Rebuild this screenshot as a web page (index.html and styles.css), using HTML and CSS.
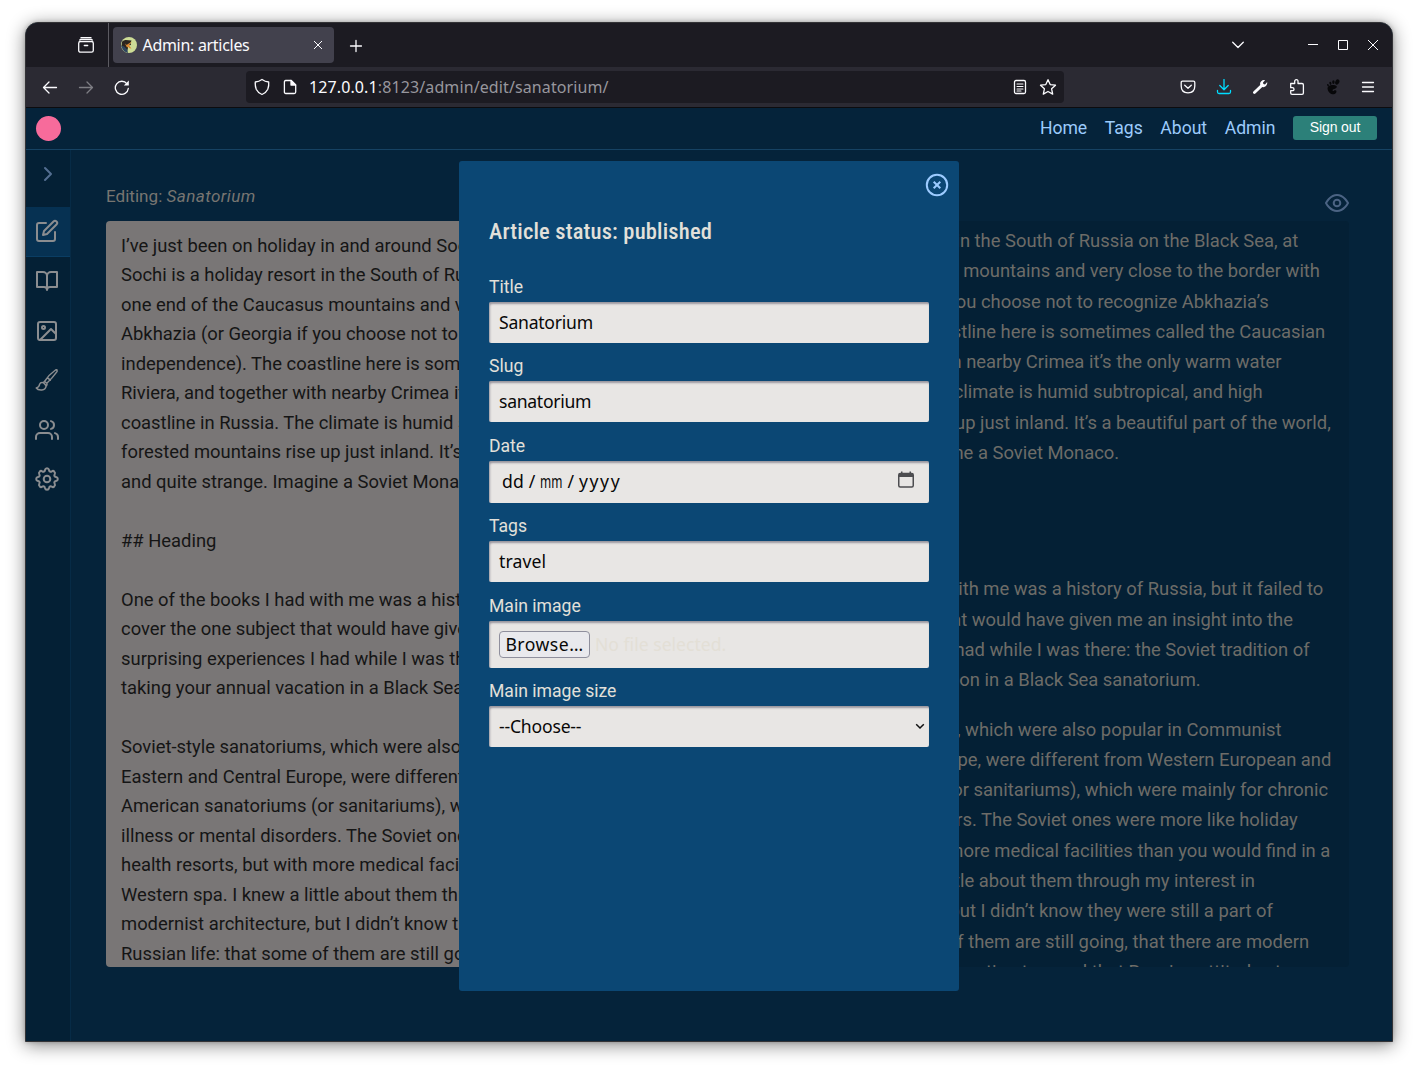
FILE: index.html
```html
<!DOCTYPE html>
<html lang="en">
<head>
<meta charset="utf-8">
<title>Admin: articles</title>
<link rel="stylesheet" href="styles.css">
</head>
<body>
<div class="window">
  <div class="tabbar">
    <svg class="icon history" width="18" height="18" viewBox="0 0 18 18"><path d="M4 1.700h10M2.800 4.200q0-.8 1-.8h10.400q1 0 1 .8"/><rect x="1.700" y="5.500" width="14.600" height="10.700" rx="1.800"/><path d="M7.300 9.500h3.400"/></svg>
    <div class="tab">
      <svg class="favicon" width="16" height="16" viewBox="0 0 16 16"><circle cx="8" cy="8" r="8" fill="#cddc96"/><path d="M1.200 4.500Q3 2.600 5 3l5.500.6-1 2.400.5 2-3.500.5.500 2.500-1 3.500Q2 13 .5 9z" fill="#2b2620"/><path d="M11 4.500L8 8.200l2.500 3.300-2-.3L5.500 8zM4 6.500l3.500 3-1.500 1z" fill="#dc8b32"/><path d="M.2 8.500l3 1 3 3 .8 3.400Q1.600 15 .2 8.500z" fill="#2d4660"/></svg>
      <span class="tab-title">Admin: articles</span>
      <svg class="icon thin" width="10" height="10" viewBox="0 0 10 10"><path d="M1 1l8 8M9 1l-8 8"/></svg>
    </div>
    <svg class="icon newtab" width="14" height="14" viewBox="0 0 14 14"><path d="M7 1.500v11M1.500 7h11"/></svg>
    <div class="controls">
      <svg class="icon alltabs" width="14" height="8" viewBox="0 0 14 8"><path d="M1.700 1.200L7 6.500l5.300-5.300"/></svg>
      <svg class="icon thin" width="12" height="12" viewBox="0 0 12 12"><path d="M1 5.500h10"/></svg>
      <svg class="icon thin" width="12" height="12" viewBox="0 0 12 12"><rect x="1.500" y="1.500" width="9" height="9"/></svg>
      <svg class="icon thin" width="12" height="12" viewBox="0 0 12 12"><path d="M1 1l10 10M11 1L1 11"/></svg>
    </div>
  </div>
  <div class="toolbar">
    <svg class="icon" width="16" height="16" viewBox="0 0 16 16"><path d="M14.500 8.500H1.500M7 3L1.500 8.500 7 14"/></svg>
    <svg class="icon faded" width="16" height="16" viewBox="0 0 16 16"><path d="M1.500 8.500h13M9 3l5.500 5.500L9 14"/></svg>
    <svg class="icon" width="16" height="16" viewBox="0 0 16 16"><path d="M14.300 9.500A6.500 6.500 0 1 1 13 4.800"/><path d="M14.800 1.500v5H9.800z" fill="#fbfbfe" stroke="none"/></svg>
    <div class="urlbar">
      <svg class="icon" width="16" height="18" viewBox="0 0 16 18"><path d="M8 1.500q3 2.300 6.700 2.500.4 3.500-.9 7.300Q12 15 8 16.500 4 15 2.200 11.300.9 7.500 1.300 4 5 3.800 8 1.500z"/></svg>
      <svg class="icon page" width="14" height="16" viewBox="0 0 14 16"><path d="M2.700 1.500h5.500L12.700 6v7q0 1.500-1.500 1.500H2.900q-1.500 0-1.500-1.500V3q0-1.500 1.300-1.500z"/><path d="M8 1.500V6h4.600z" fill="#fbfbfe"/></svg>
      <span class="url"><b>127.0.0.1</b>:8123/admin/edit/sanatorium/</span>
      <svg class="icon reader" width="14" height="16" viewBox="0 0 14 16"><rect x="1.500" y="1.500" width="11" height="13" rx="1.500"/><path d="M4 5h6M4 7.500h6M4 10h6M4 12h4" stroke-width="1.100"/></svg>
      <svg class="icon" width="18" height="18" viewBox="0 0 18 18"><path d="M9 1.700l2.200 4.900 5.300.6-3.900 3.600 1.100 5.300L9 13.500l-4.700 2.600 1.100-5.300-3.900-3.600 5.300-.6z"/></svg>
    </div>
    <div class="extensions">
      <svg class="icon" width="16" height="16" viewBox="0 0 16 16"><path d="M2.500 2.200h11q1.300 0 1.300 1.300V7q0 6.700-6.800 6.900Q1.200 13.700 1.200 7V3.500q0-1.300 1.300-1.300zM4.700 6.200L8 9.300l3.300-3.100"/></svg>
      <svg class="icon download" width="16" height="16" viewBox="0 0 16 16"><path d="M8 .5v10M3.800 6.500L8 10.700l4.200-4.200M1.500 11.500v1.500q0 1.500 1.500 1.500h10q1.500 0 1.500-1.500v-1.500"/></svg>
      <svg width="16" height="16" viewBox="0 0 16 16" fill="#fbfbfe"><path d="M10.500 1.200q1.500-.6 2.600 0L11 3.500l.4 1.500 1.600.4L15.200 3q.5 2.300-1.200 4-1.500 1.500-3.700 1L3.400 14.600q-1 .8-2 0t0-2L8.200 6Q7.500 2.800 10.500 1.200z"/></svg>
      <svg class="icon" width="16" height="18" viewBox="0 0 16 18"><path d="M1.700 5.500h4V3.300q0-1.600 1.700-1.600T9 3.300v2.200h4q1.400 0 1.400 1.400v8q0 1.400-1.400 1.400H3.100q-1.400 0-1.400-1.400v-2.200h1.700q1.600 0 1.600-1.500T3.400 9.700H1.700z"/></svg>
      <svg width="16" height="16" viewBox="0 0 16 16" fill="#070709"><path d="M9.800 6.200C6 5.500 2.200 7 2.600 10c.3 3 3.300 5.500 6.200 5.300 2.700-.3 3.500-3.400 1.700-4-1.400-.4-1.600 1.200-2.700.5C6 10 12.400 9.800 11.800 7.400q-.3-1-2-1.200z"/><ellipse cx="12.300" cy="3" rx="2" ry="2.700" transform="rotate(25 12.300 3)"/><ellipse cx="8.400" cy="3.100" rx="1.200" ry="1.900"/><ellipse cx="5.400" cy="4.300" rx="1" ry="1.600" transform="rotate(-15 5.400 4.300)"/><ellipse cx="3" cy="6.200" rx=".8" ry="1.300" transform="rotate(-25 3 6.200)"/></svg>
      <svg class="icon" width="14" height="12" viewBox="0 0 14 12"><path d="M1.500 1.500h11M1.500 6h11M1.500 10.500h11"/></svg>
    </div>
  </div>

  <header class="site-header">
    <div class="logo"></div>
    <nav class="nav"><a>Home</a><a>Tags</a><a>About</a><a>Admin</a></nav>
    <button class="signout">Sign out</button>
  </header>

  <div class="app">
    <aside class="sidebar">
      <div class="side-item toggle"><svg width="24" height="24" viewBox="0 0 24 24"><path d="M9 18l6-6-6-6"/></svg></div>
      <div class="side-item active"><svg width="24" height="24" viewBox="0 0 24 24"><path d="M11 4H4a2 2 0 0 0-2 2v14a2 2 0 0 0 2 2h14a2 2 0 0 0 2-2v-7"/><path d="M18.500 2.500a2.121 2.121 0 0 1 3 3L12 15l-4 1 1-4 9.500-9.500z"/></svg></div>
      <div class="side-item"><svg width="24" height="24" viewBox="0 0 24 24"><path d="M2 3h6a4 4 0 0 1 4 4v14a3 3 0 0 0-3-3H2zM22 3h-6a4 4 0 0 0-4 4v14a3 3 0 0 1 3-3h7z"/></svg></div>
      <div class="side-item"><svg width="24" height="24" viewBox="0 0 24 24"><rect x="3" y="3" width="18" height="18" rx="2"/><circle cx="8.500" cy="8.500" r="1.500"/><path d="M21 15l-5-5L5 21"/></svg></div>
      <div class="side-item"><svg class="brush" width="24" height="24" viewBox="0 0 24 24"><path d="M9.500 13.500Q14 6.500 20.500 2q1.400-.6 1.600.2.300.8-.3 1.700Q17 10.500 11.800 15.200zM12.300 9.700l3 2.500M9.500 13.500l2.300 1.700q.6 1.400-.3 2.500L8.600 15q0-1 .9-1.500zM8.600 14.800q-3-1-4 1.500-.3 3-3.300 3.700 1.500 2.300 5.500 2 4-.6 4.300-4.300z"/></svg></div>
      <div class="side-item"><svg width="24" height="24" viewBox="0 0 24 24"><path d="M17 21v-2a4 4 0 0 0-4-4H5a4 4 0 0 0-4 4v2"/><circle cx="9" cy="7" r="4"/><path d="M23 21v-2a4 4 0 0 0-3-3.870M16 3.130a4 4 0 0 1 0 7.750"/></svg></div>
      <div class="side-item"><svg width="24" height="24" viewBox="0 0 24 24"><circle cx="12" cy="12" r="3.300"/><path d="M12 1.200c1.300 0 1.800.7 2 1.800.2 1.500 1.500 2.100 2.800 1.300.9-.6 1.700-.6 2.500.4 1 .9.900 1.600.4 2.500-.9 1.300-.2 2.500 1.300 2.800 1.100.2 1.800.7 1.800 2s-.7 1.800-1.800 2c-1.500.3-2.200 1.500-1.300 2.800.5.900.6 1.600-.4 2.500-.8 1-1.600 1-2.500.4-1.300-.8-2.600-.2-2.800 1.300-.2 1.100-.7 1.800-2 1.800s-1.800-.7-2-1.800c-.2-1.500-1.500-2.100-2.800-1.300-.9.600-1.700.6-2.500-.4-1-.9-.9-1.600-.4-2.500.9-1.300.2-2.500-1.300-2.800-1.100-.2-1.800-.7-1.800-2s.7-1.800 1.800-2c1.500-.3 2.200-1.500 1.300-2.800-.5-.9-.6-1.600.4-2.500.8-1 1.600-1 2.500-.4 1.300.8 2.600.2 2.800-1.300.2-1.100.7-1.800 2-1.800z"/></svg></div>
    </aside>
    <main class="editor">
      <div class="editor-head">
        <div class="editing">Editing: <em>Sanatorium</em></div>
        <svg class="eye" width="26" height="24" viewBox="0 0 26 24"><path d="M2 12s4-8 11-8 11 8 11 8-4 8-11 8-11-8-11-8z"/><circle cx="13" cy="12" r="3.300"/></svg>
      </div>
      <div class="panes">
        <div class="source">I’ve just been on holiday in and around Sochi.
Sochi is a holiday resort in the South of Russia on the Black Sea, at
one end of the Caucasus mountains and very close to the border with
Abkhazia (or Georgia if you choose not to recognize Abkhazia’s
independence). The coastline here is sometimes called the Caucasian
Riviera, and together with nearby Crimea it’s the only warm water
coastline in Russia. The climate is humid subtropical, and high
forested mountains rise up just inland. It’s a beautiful part of the world,
and quite strange. Imagine a Soviet Monaco.

## Heading

One of the books I had with me was a history of Russia, but it failed to
cover the one subject that would have given me an insight into the
surprising experiences I had while I was there: the Soviet tradition of
taking your annual vacation in a Black Sea sanatorium.

Soviet-style sanatoriums, which were also popular in Communist
Eastern and Central Europe, were different from Western European and
American sanatoriums (or sanitariums), which were mainly for chronic
illness or mental disorders. The Soviet ones were more like holiday
health resorts, but with more medical facilities than you would find in a
Western spa. I knew a little about them through my interest in
modernist architecture, but I didn’t know they were still a part of
Russian life: that some of them are still going, that there are modern</div>
        <div class="preview">
          <p>Sochi is a holiday resort in the South of Russia on the Black Sea, at
one end of the Caucasus mountains and very close to the border with
Abkhazia (or Georgia if you choose not to recognize Abkhazia’s
independence). The coastline here is sometimes called the Caucasian
Riviera, and together with nearby Crimea it’s the only warm water
coastline in Russia. The climate is humid subtropical, and high
forested mountains rise up just inland. It’s a beautiful part of the world,
and quite strange. Imagine a Soviet Monaco.</p>
          <h2>Heading</h2>
          <p>One of the books I had with me was a history of Russia, but it failed to
cover the one subject that would have given me an insight into the
surprising experiences I had while I was there: the Soviet tradition of
taking your annual vacation in a Black Sea sanatorium.</p>
          <p>Soviet-style sanatoriums, which were also popular in Communist
Eastern and Central Europe, were different from Western European and
American sanatoriums (or sanitariums), which were mainly for chronic
illness or mental disorders. The Soviet ones were more like holiday
health resorts, but with more medical facilities than you would find in a
Western spa. I knew a little about them through my interest in
modernist architecture, but I didn’t know they were still a part of
Russian life: that some of them are still going, that there are modern
sanatoriums under construction too, and that Russian attitudes to</p>
        </div>
      </div>
    </main>

    <section class="modal">
      <svg class="close" width="24" height="24" viewBox="0 0 24 24"><circle cx="12" cy="12" r="10.200"/><path d="M8.700 8.700l6.600 6.600M15.300 8.700l-6.600 6.600"/></svg>
      <h1>Article status: published</h1>
      <label>Title</label>
      <div class="field"><span class="title-value">Sanatorium</span></div>
      <label>Slug</label>
      <div class="field"><span class="slug-value">sanatorium</span></div>
      <label>Date</label>
      <div class="field date"><span class="dd">dd</span><span>/</span><span class="mm">mm</span><span>/</span><span class="yyyy">yyyy</span>
        <svg class="calendar" width="16" height="17" viewBox="0 0 16 17"><rect x=".75" y="2.500" width="14.500" height="13.500" rx="1.500" fill="none" stroke="#4d4d50" stroke-width="1.500"/><path d="M1 2h14v4H1zM3 .5h1.500V3H3zM11.500.5H13V3h-1.500z" fill="#4d4d50"/></svg></div>
      <label>Tags</label>
      <div class="field"><span class="tags-value">travel</span></div>
      <label>Main image</label>
      <div class="field file"><span class="browse">Browse…</span><span class="nofile">No file selected.</span></div>
      <label>Main image size</label>
      <div class="field select"><span class="choose">--Choose--</span><svg width="10" height="7" viewBox="0 0 10 7"><path d="M1.200 1.200L5 5l3.800-3.800" fill="none" stroke="#111" stroke-width="1.500"/></svg></div>
    </section>
  </div>
</div>
</body>
</html>
```
FILE: styles.css
```css
* { box-sizing: border-box; }
body { margin: 0; height: 1070px; padding: 22px 25px 28px; background: #fff; overflow: hidden; font-family: Roboto, sans-serif; }
svg { display: block; flex: none; }
.window { width: 1368px; height: 1020px; border: 1px solid #333336; border-radius: 13px 13px 0 0; overflow: hidden; background: #05233a; box-shadow: 0 3px 18px rgba(0,0,0,.48), 0 0 4px rgba(0,0,0,.2); display: flex; flex-direction: column; }
.icon { fill: none; stroke: #fbfbfe; stroke-width: 1.3; stroke-linecap: round; stroke-linejoin: round; }
.thin { stroke-width: 1; stroke-linecap: butt; }
.faded { opacity: .4; }

.tabbar { height: 44px; flex: none; background: #1c1b22; display: flex; align-items: center; padding-left: 51px; font-family: "Noto Sans", sans-serif; }
.history { margin-right: 13px; }
.tab { height: 36px; width: 221px; margin-left: 5px; background: #42414d; border-radius: 4px; display: flex; align-items: center; padding: 0 11px 0 8px; color: #fbfbfe; position: relative; }
.tab::before { content: ""; position: absolute; left: -5px; top: -4px; width: 1px; height: 44px; background: #5c5b62; }
.tab-title { font-size: 16px; letter-spacing: -.3px; margin: 0 auto 0 5.500px; }
.newtab { margin: 1px 0 0 14.500px; }
.controls { margin-left: auto; display: flex; align-items: center; gap: 18px; padding-right: 13px; }
.alltabs { margin-right: 44px; }

.toolbar { height: 41px; flex: none; background: #2b2a33; border-bottom: 1px solid #0c0c0f; display: flex; align-items: center; gap: 20px; padding-left: 16px; }
.urlbar { width: 818px; height: 32px; margin-left: 96px; background: #1c1b22; border-radius: 4px; display: flex; align-items: center; padding: 0 7px 0 8px; }
.page { margin-left: 13px; }
.url { font: 16px "Noto Sans", sans-serif; letter-spacing: .11px; color: #97969d; margin: 0 auto 0 12px; }
.url b { font-weight: 400; color: #fbfbfe; }
.reader { margin-right: 12px; }
.extensions { margin-left: auto; display: flex; align-items: center; gap: 20.200px; padding-right: 17px; }
.download { stroke: #00ddff; }

.site-header { height: 42px; flex: none; border-bottom: 1px solid #164263; display: flex; align-items: center; padding: 0 15px 0 10px; }
.logo { width: 25px; height: 25px; border-radius: 50%; background: #f76b9b; }
.nav { margin: -2px 0 0 auto; display: flex; gap: 17.600px; font-size: 17.600px; letter-spacing: -.02px; color: #9ccbfc; }
.signout { width: 84px; height: 24px; margin: -1px 0 0 17.600px; border: 0; border-radius: 3px; background: #2c8079; color: #fff; font: 14px/22px "Liberation Sans", sans-serif; letter-spacing: -.1px; padding: 0 0 2px; }

.app { flex: 1; display: flex; position: relative; min-height: 0; }
.sidebar { width: 45px; border-right: 1px solid #072b46; background: #042035; }
.side-item { height: 49.500px; display: flex; align-items: center; justify-content: center; padding-right: 2px; }
.side-item svg { fill: none; stroke: #8b8d90; stroke-width: 2; stroke-linecap: round; stroke-linejoin: round; }
.side-item .brush { stroke-width: 1.5; }
.toggle { height: 57px; padding: 0 0 9px; }
.toggle svg { stroke: #546e91; }
.active { background: #063152; border-bottom: 1px solid #0a3d63; }
.editor { flex: 1; padding: 35px 43px 0 35px; min-width: 0; }
.editor-head { height: 36px; display: flex; justify-content: space-between; }
.editing { font-size: 17.100px; line-height: 23px; color: #777571; }
.editing em { letter-spacing: .42px; }
.eye { margin-top: 6px; margin-right: -1px; fill: none; stroke: #4b6383; stroke-width: 2; }
.panes { display: flex; justify-content: space-between; height: 746px; }
.source, .preview { width: 620px; height: 746px; border-radius: 4px; overflow: hidden; font-size: 18.400px; }
.source { background: #797676; color: #151515; line-height: 29.480px; padding: 10px 15px; white-space: pre; }
.preview { background: #042035; color: #6d6c68; line-height: 30.300px; padding: 5px 0 0 27px; }
.preview p { margin: 0 0 19px; white-space: pre; }
.preview h2 { margin: 0; height: 87px; font-size: 26px; line-height: 60px; font-weight: 400; }

.modal { position: absolute; left: 433px; top: 11px; width: 500px; height: 830px; border-radius: 3px; background: #0b4774; padding: 0 30px; color: #e2e0da; }
.close { position: absolute; right: 10px; top: 12px; fill: none; stroke: #9ccbff; stroke-width: 2; }
.modal h1 { height: 102.400px; margin: 0; font: 500 22.500px/30px "Roboto Condensed", Roboto, sans-serif; letter-spacing: .18px; padding-top: 55px; }
.modal label { display: block; height: 38.600px; padding-top: 12.700px; font-size: 17.600px; line-height: 23px; }
.field { height: 40.800px; background: #e8e6e4; color: #080808; border-radius: 2px; box-shadow: inset 1px 2px 2px rgba(60,55,75,.45); display: flex; align-items: center; padding: 0 10px 1px; font: 17.600px "Noto Sans", sans-serif; }
.title-value { letter-spacing: -.25px; }
.slug-value { letter-spacing: -.3px; }
.tags-value { letter-spacing: .1px; }
.choose { letter-spacing: -.2px; }
.date { height: 42px; padding: 0 15px 1px 13px; gap: 5px; }
.dd, .mm { letter-spacing: .1px; }
.mm { display: inline-block; width: 22px; transform: scaleX(.68); transform-origin: 0 50%; }
.yyyy { letter-spacing: 1.600px; }
.calendar { margin: -3px 0 0 auto; }
.file { height: 47px; padding-bottom: 0; }
.browse { border: 1px solid #8f8f9d; border-radius: 4px; background: #e9e9ed; height: 27px; width: 91px; line-height: 25px; text-align: center; letter-spacing: .5px; }
.nofile { margin-left: 5px; color: #e3dfd6; }
.select { justify-content: space-between; padding-right: 4px; }
```
